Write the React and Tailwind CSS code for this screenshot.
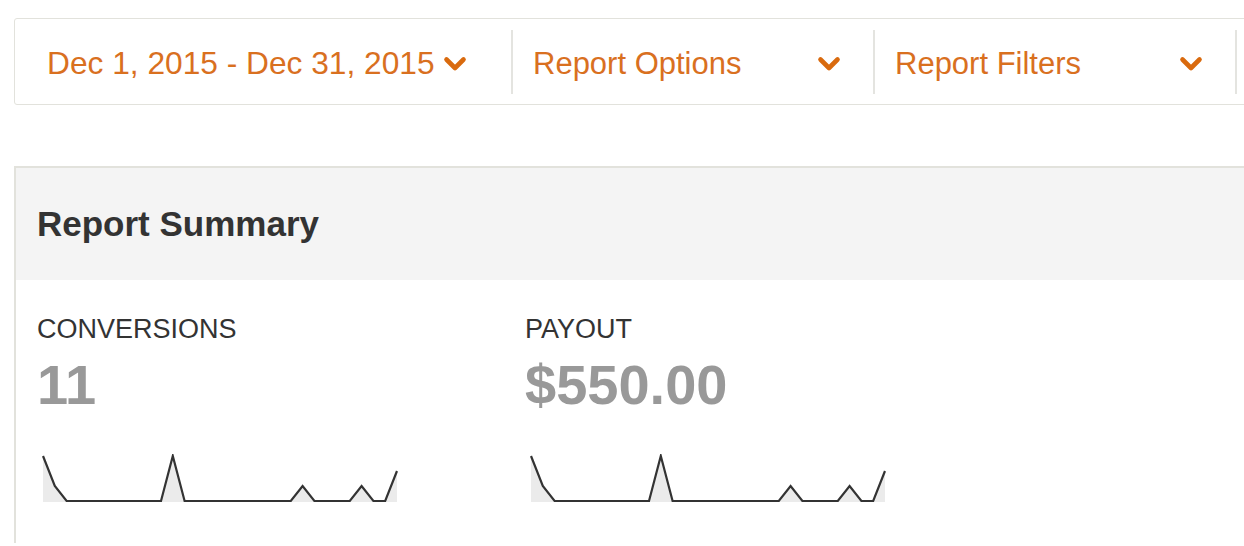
import React from "react";

const daily = [3, 1, 0, 0, 0, 0, 0, 0, 0, 0, 0, 3, 0, 0, 0, 0, 0, 0, 0, 0, 0, 0, 1, 0, 0, 0, 0, 1, 0, 0, 2];

function Chevron() {
  return (
    <svg width="24" height="16" viewBox="0 0 24 16" className="shrink-0">
      <path d="M3.5 3.5 L12 12 L20.5 3.5" fill="none" stroke="#d96a0e" strokeWidth="4.6" strokeLinecap="round" strokeLinejoin="round" />
    </svg>
  );
}

function Sparkline({ data }) {
  const w = 354;
  const h = 45;
  const max = Math.max(...data);
  const step = w / (data.length - 1);
  const pts = data.map((v, i) => [1 + i * step, 2 + h - (v / max) * h]);
  const line = pts.map((p, i) => `${i ? "L" : "M"}${p[0].toFixed(1)} ${p[1].toFixed(1)}`).join(" ");
  const area = `${line} L${pts[pts.length - 1][0].toFixed(1)} ${h + 3} L1 ${h + 3} Z`;
  return (
    <svg width={w + 2} height={h + 4} className="block">
      <path d={area} fill="#ebebeb" />
      <path d={line} fill="none" stroke="#333" strokeWidth="2.2" strokeLinejoin="miter" />
    </svg>
  );
}

function Stat({ label, value }) {
  return (
    <div className="w-[488px] shrink-0">
      <div className="text-[27px] leading-[30px] text-[#333]">{label}</div>
      <div className="mt-[11px] text-[56px] leading-[60px] font-bold text-[#999]">{value}</div>
      <div className="mt-[39px] ml-[5px]">
        <Sparkline data={daily} />
      </div>
    </div>
  );
}

export default function App() {
  return (
    <div className="w-[1244px] h-[546px] overflow-hidden bg-white font-['Liberation_Sans',Arial,sans-serif]">
      {/* Toolbar */}
      <div className="ml-[14px] mt-[18px] w-[1300px] h-[87px] border border-[#e2e2dc] rounded-[3px] flex items-center">
        <div className="w-[498px] h-[64px] shrink-0 border-r-2 border-[#e4e4e0] flex items-center pl-[32px] gap-[8px] pt-[5px]">
          <span className="text-[31.7px] text-[#d9701f]">Dec 1, 2015 - Dec 31, 2015</span>
          <Chevron />
        </div>
        <div className="w-[362px] h-[64px] shrink-0 border-r-2 border-[#e4e4e0] flex items-center justify-between pl-[20px] pr-[32px] pt-[5px]">
          <span className="text-[31px] text-[#d9701f]">Report Options</span>
          <Chevron />
        </div>
        <div className="w-[362px] h-[64px] shrink-0 border-r-2 border-[#e4e4e0] flex items-center justify-between pl-[20px] pr-[32px] pt-[5px]">
          <span className="text-[31px] text-[#d9701f]">Report Filters</span>
          <Chevron />
        </div>
      </div>

      {/* Report summary panel */}
      <div className="ml-[14px] mt-[61px] w-[1300px] border-l-2 border-t-2 border-[#e2e2dc]">
        <div className="h-[112px] bg-[#f4f4f4] flex items-center pl-[21px]">
          <h2 className="text-[35px] font-bold text-[#333]">Report Summary</h2>
        </div>
        <div className="flex pl-[21px] pt-[34px] pb-[40px]">
          <Stat label="CONVERSIONS" value="11" />
          <Stat label="PAYOUT" value="$550.00" />
        </div>
      </div>
    </div>
  );
}
